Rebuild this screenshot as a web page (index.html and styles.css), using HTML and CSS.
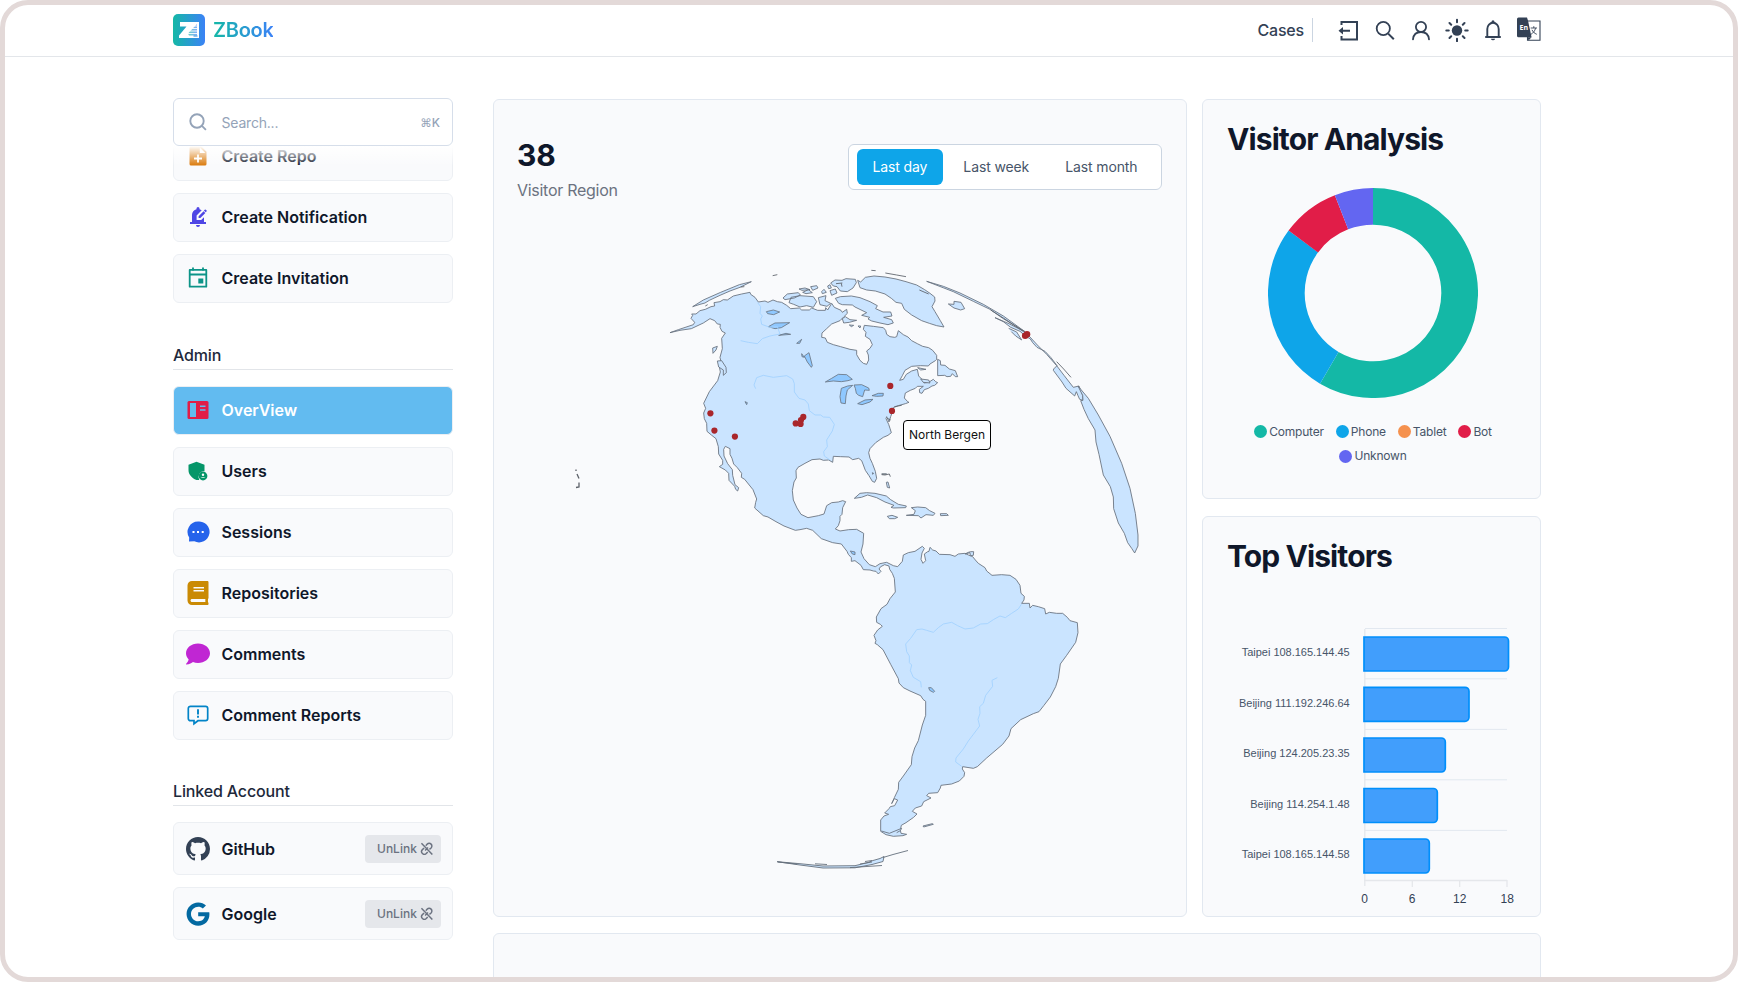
FILE: index.html
```html
<!DOCTYPE html>
<html lang="en">
<head>
<meta charset="utf-8">
<title>ZBook</title>
<link rel="stylesheet" href="styles.css">
</head>
<body>
<div class="frame">
  <header class="topbar">
    <a class="brand">
      <svg class="brand-mark" viewBox="0 0 32 32">
        <defs><linearGradient id="brand" x1="0" x2="1"><stop offset="0" stop-color="#14b8a6"/><stop offset="1" stop-color="#3b82f6"/></linearGradient></defs>
        <rect width="32" height="32" rx="5" fill="url(#brand)"/>
        <path d="M7 8h19v16H6v-2.500L13.500 12.500H7z" fill="#fff"/>
        <path d="M15 19.500 24 10v11.500h-8" fill="url(#brand)" opacity=".65"/>
        <path d="M19 14.500h5M17 17h7M14 19.500h10M20 12h4" stroke="#fff" stroke-width=".9"/>
        <path d="M20.500 22h4" stroke="#2f8fdc" stroke-width="1"/>
      </svg>
      <span class="brand-name">ZBook</span>
    </a>
    <nav class="tools">
      <span class="cases">Cases</span>
      <svg class="tool" viewBox="0 0 24 24"><path d="M4.500 7V4h15.500v17.500H4.500V18" fill="none" stroke="currentColor" stroke-width="2"/><path d="M5.500 12.700H13" stroke="currentColor" stroke-width="2"/><path d="M1.500 12.700 6 9v7.400z" fill="currentColor"/></svg>
      <svg class="tool" viewBox="0 0 24 24" fill="none" stroke="currentColor" stroke-width="1.800"><circle cx="10.300" cy="10.500" r="6.600"/><path d="m15.200 15.600 5.600 5.700" stroke-width="2"/></svg>
      <svg class="tool" viewBox="0 0 24 24" fill="none" stroke="currentColor" stroke-width="1.800" stroke-linecap="round"><circle cx="12" cy="8.900" r="5.100"/><path d="M4 21.300c.5-4.600 3.700-7.300 8-7.300s7.500 2.700 8 7.300"/></svg>
      <svg class="tool" viewBox="0 0 24 24"><circle cx="12" cy="12.500" r="5.200" fill="currentColor"/><path d="M12 1.800v2.500M12 20.700v2.500M1.300 12.500h2.500M20.200 12.500h2.500M4.500 5l1.700 1.700M17.800 18.300l1.700 1.700M4.500 20l1.700-1.700M17.800 6.700 19.500 5" stroke="currentColor" stroke-width="2" stroke-linecap="round"/></svg>
      <svg class="tool" viewBox="0 0 24 24"><path d="M6.300 18.500V11a5.700 6.200 0 0 1 11.400 0v7.500M4.200 19h15.600" fill="none" stroke="currentColor" stroke-width="1.900"/><path d="M10.500 5V3.700a1.500 1.500 0 0 1 3 0V5zM10 20.700h4a2 1.500 0 0 1-4 0z" fill="currentColor"/></svg>
      <svg class="tool lang" viewBox="0 0 24 25"><path d="M10.500 4H23v19.200H10.500z" fill="#fff" stroke="currentColor" stroke-width="1.100"/><path d="M1.500.5H10l.9 2.800 3.700 17H1.500a1.500 1.500 0 0 1-1.500-1.500V2A1.500 1.500 0 0 1 1.500.5z" fill="currentColor"/><path d="m10.500 20.300 4 0-3 3.200z" fill="currentColor"/><path d="M13.700 11h6.300M16.800 9.200V11M18.600 11.200c-.8 2.800-2.400 4.800-4.700 6.200M15 12.800c.9 2 2.400 3.500 4.800 4.500" fill="none" stroke="currentColor" stroke-width=".9"/><text class="lang-text" x="2.600" y="13">En</text></svg>
    </nav>
  </header>

  <main class="page">
    <aside class="sidebar">
      <div class="search">
        <svg class="search-icon" viewBox="0 0 18 18" fill="none" stroke="currentColor" stroke-width="1.900"><circle cx="8" cy="8" r="6.700"/><path d="m12.900 12.900 4 4"/></svg>
        <span class="search-hint">Search...</span>
        <kbd class="search-key"><span class="cmd">⌘</span>K</kbd>
      </div>
      <div class="menu">
        <ul class="list first">
          <li class="item"><svg class="ico" viewBox="0 0 24 24"><path d="M5.500 2H15l5.500 5.800V20a1.600 1.600 0 0 1-1.600 1.600H5.100A1.600 1.600 0 0 1 3.500 20V4a2 2 0 0 1 2-2z" fill="#d97706"/><path d="M13.800 3.500V9h5.500z" fill="#fff"/><path d="M12 10.500v8M8 14.500h8" stroke="#fff" stroke-width="1.800"/></svg><span>Create Repo</span></li>
          <li class="item"><svg class="ico" viewBox="0 0 24 24" fill="#4f46e5"><path d="M17.580 6.250l1.770 1.770L14.370 13H12.600v-1.770l4.980-4.980zm3.270-.44l-1.060-1.060a.75.75 0 0 0-1.060 0l-.85.85 1.770 1.770.85-.85c.29-.2.300-.52.350-.71zM18 12.200V17h2v2H4v-2h2v-7c0-2.790 1.910-5.140 4.500-5.800v-.7a1.500 1.500 0 0 1 3 0v.7c.82.210 1.570.590 2.210 1.090L10.600 10.400V15h4.600l2.800-2.800zM10 20h4a2 2 0 0 1-4 0z"/></svg><span>Create Notification</span></li>
          <li class="item"><svg class="ico" viewBox="0 0 24 24"><path d="M3.700 3.900h16.600v16.800H3.700z" fill="none" stroke="#0d9488" stroke-width="1.800" stroke-linejoin="round"/><path d="M3.500 8.500h17M7 1.500v3M17 1.500v3" stroke="#0d9488" stroke-width="1.800"/><path d="M12.300 12.500h5v5h-5z" fill="#0d9488"/></svg><span>Create Invitation</span></li>
        </ul>
        <h3 class="group">Admin</h3>
        <ul class="list">
          <li class="item active"><svg class="ico" viewBox="0 0 24 24"><rect x="1.500" y="3" width="21" height="18" rx="1.500" fill="#e11d48"/><path d="M4 5h6v14H4z" fill="#62bbf0"/><path d="M14 8.300h5.500M14 12h5.500" stroke="#62bbf0" stroke-width="1.500"/></svg><span>OverView</span></li>
          <li class="item"><svg class="ico" viewBox="0 0 24 24"><path d="M10.500 2.800 18.500 5.700v6.200a6 6 0 0 0-5.200 9l-2.800.2C5.500 18.800 2.500 15.500 2.500 11V5.700z" fill="#059669"/><circle cx="17" cy="17" r="4.400" fill="#059669"/><circle cx="17" cy="15.700" r="1.200" fill="#fff"/><path d="M14.500 18.900a3 1.600 0 0 1 5 0z" fill="#fff"/></svg><span>Users</span></li>
          <li class="item"><svg class="ico" viewBox="0 0 24 24"><path d="M12 1.500A10.500 10.500 0 1 1 8.300 21.300L3 21.600l.2-4A10.500 10.500 0 0 1 12 1.500z" fill="#2563eb"/><path d="M6.500 11h2v2h-2zM11 11h2v2h-2zM15.700 11h2v2h-2z" fill="#fff"/></svg><span>Sessions</span></li>
          <li class="item"><svg class="ico" viewBox="0 0 448 512"><path fill="#ca8a04" d="M448 360V24c0-13.300-10.700-24-24-24H96C43 0 0 43 0 96v320c0 53 43 96 96 96h328c13.300 0 24-10.700 24-24v-16c0-7.500-3.500-14.300-8.900-18.700-4.200-15.400-4.200-59.300 0-74.700 5.400-4.300 8.900-11.100 8.900-18.600zM128 134c0-3.300 2.700-6 6-6h212c3.300 0 6 2.700 6 6v20c0 3.300-2.700 6-6 6H134c-3.300 0-6-2.700-6-6v-20zm0 64c0-3.300 2.700-6 6-6h212c3.300 0 6 2.700 6 6v20c0 3.300-2.700 6-6 6H134c-3.300 0-6-2.700-6-6v-20zm253.400 250H96c-17.700 0-32-14.300-32-32 0-17.600 14.400-32 32-32h285.400c-1.900 17.100-1.900 46.900 0 64z"/></svg><span>Repositories</span></li>
          <li class="item"><svg class="ico" viewBox="0 0 512 512"><path fill="#c026d3" d="M256 32C114.600 32 0 125.100 0 240c0 49.600 21.400 95 57 130.700C44.500 421.100 2.700 466 2.200 466.500c-2.200 2.300-2.800 5.700-1.500 8.700S4.800 480 8 480c66.300 0 116-31.800 140.600-51.400 32.700 12.300 69 19.400 107.400 19.400 141.400 0 256-93.100 256-208S397.400 32 256 32z"/></svg><span>Comments</span></li>
          <li class="item"><svg class="ico" viewBox="0 0 24 24"><path d="M4.500 3.300h15a2.200 2.200 0 0 1 2.200 2.200v10a2.200 2.200 0 0 1-2.200 2.200H12l-4 3v-3H4.500a2.200 2.200 0 0 1-2.200-2.200v-10a2.200 2.200 0 0 1 2.200-2.200z" fill="none" stroke="#0284c7" stroke-width="1.700"/><path d="M12 6.200v5.300M12 12.800v2" stroke="#0284c7" stroke-width="1.900"/></svg><span>Comment Reports</span></li>
        </ul>
        <h3 class="group linked">Linked Account</h3>
        <ul class="list">
          <li class="item tall"><svg class="ico" viewBox="0 0 16 16"><path fill="#334155" d="M8 0C3.580 0 0 3.580 0 8c0 3.540 2.290 6.530 5.470 7.590.4.070.55-.17.55-.38 0-.19-.01-.82-.01-1.490-2.010.37-2.530-.49-2.690-.94-.09-.23-.48-.94-.82-1.130-.28-.15-.68-.52-.01-.53.63-.01 1.080.58 1.230.82.72 1.210 1.870.87 2.330.66.070-.52.280-.87.510-1.070-1.780-.2-3.640-.89-3.640-3.950 0-.87.310-1.590.82-2.150-.08-.2-.36-1.020.080-2.120 0 0 .67-.21 2.200.82.640-.18 1.320-.27 2-.27s1.360.09 2 .27c1.530-1.040 2.200-.82 2.200-.82.440 1.100.16 1.920.08 2.120.51.56.82 1.270.82 2.150 0 3.070-1.870 3.750-3.650 3.950.29.25.54.73.54 1.480 0 1.070-.01 1.930-.01 2.200 0 .21.150.46.550.38A8.010 8.010 0 0 0 16 8c0-4.420-3.580-8-8-8z"/></svg><span>GitHub</span>
            <button class="unlink">UnLink<svg viewBox="0 0 14 14" fill="none" stroke="currentColor" stroke-width="1.500"><path d="M1.500 1.200 12.800 13M6 3.800l1.500-1.600a2.800 2.800 0 0 1 4 4L9.800 7.600M8 10.300l-1.500 1.600a2.800 2.800 0 0 1-4-4L4.300 6.200M5.300 8.700l3-3"/></svg></button></li>
          <li class="item tall"><svg class="ico" viewBox="0 0 488 512"><path fill="#0369a1" d="M488 261.800C488 403.300 391.100 504 248 504 110.800 504 0 393.200 0 256S110.800 8 248 8c66.800 0 123 24.500 166.300 64.900l-67.500 64.900C258.500 52.600 94.300 116.600 94.300 256c0 86.500 69.100 156.600 153.700 156.600 98.200 0 135-70.400 140.800-106.900H248v-85.300h236.100c2.300 12.700 3.900 24.900 3.900 41.400z"/></svg><span>Google</span>
            <button class="unlink">UnLink<svg viewBox="0 0 14 14" fill="none" stroke="currentColor" stroke-width="1.500"><path d="M1.500 1.200 12.800 13M6 3.800l1.500-1.600a2.800 2.800 0 0 1 4 4L9.800 7.600M8 10.300l-1.500 1.600a2.800 2.800 0 0 1-4-4L4.300 6.200M5.300 8.700l3-3"/></svg></button></li>
        </ul>
      </div>
    </aside>

    <section class="dash">
      <article class="card region">
        <div class="region-head">
          <div>
            <div class="count">38</div>
            <div class="caption">Visitor Region</div>
          </div>
          <div class="tabs">
            <button class="tab on">Last day</button><button class="tab">Last week</button><button class="tab">Last month</button>
          </div>
        </div>
        <div class="map-wrap">
        <svg class="map" viewBox="494 210 692 700">
          <g transform="translate(640 250) scale(.33333)">
            <g class="land">
              <path d="M153 205L158 196 155 192 168 192 180 182 196 178 213 170 224 168 222 158 240 155 250 149 262 150 280 138 305 132 330 127 332 133 345 142 355 156 375 153 384 157 399 150 412 155 425 157 440 166 452 176 478 174 485 180 508 180 515 174 533 181 556 181 557 173 563 180 575 160 583 172 603 181 607 187 620 178 622 190 612 200 600 212 575 222 560 236 546 249 545 262 556 264 562 277 580 284 602 290 630 298 650 301 650 314 660 331 670 340 680 343 686 330 685 315 680 303 690 295 697 284 690 268 676 259 678 247 670 238 673 226 700 229 730 233 737 241 740 253 750 260 764 262 770 260 775 242 790 254 804 261 815 272 832 281 848 289 866 293 878 301 890 316 890 328 886 332 870 342 865 348 842 347 815 349 795 361 787 377 779 391 790 388 799 373 815 363 832 358 836 378 846 388 852 399 866 397 880 388 887 395 893 398 884 406 876 408 865 415 853 419 846 430 839 428 838 418 850 409 832 409 826 415 811 421 796 429 793 444 803 455 807 457 796 461 775 467 760 473 762 485 755 492 752 500 747 516 740 500 738 506 746 523 750 535 754 548 744 556 730 562 707 578 690 596 686 608 690 625 697 640 706 664 710 685 704 697 697 694 687 677 676 661 670 645 665 632 656 625 638 629 627 621 602 620 580 619 578 637 566 630 550 631 540 627 516 629 495 640 474 652 468 662 469 684 462 696 457 722 460 750 471 774 483 793 504 803 535 797 552 792 560 767 575 758 595 756 608 752 617 755 608 773 606 793 600 799 600 812 595 827 586 837 600 843 626 839 650 838 671 850 669 882 663 906 672 926 688 944 706 950 720 941 740 937 760 947 773 950 787 934 790 915 805 908 825 904 847 889 853 895 846 909 843 928 849 940 857 932 853 912 863 905 867 904 870 892 878 900 888 903 898 913 930 914 945 919 955 912 975 910 985 915 998 920 1006 930 1015 940 1035 953 1040 963 1056 976 1085 974 1110 976 1128 988 1140 1006 1143 1030 1153 1039 1152 1050 1145 1060 1168 1060 1170 1074 1178 1066 1195 1070 1214 1076 1217 1092 1228 1087 1250 1090 1268 1090 1282 1102 1290 1112 1312 1118 1314 1148 1307 1177 1280 1216 1261 1242 1255 1285 1247 1310 1231 1341 1212 1366 1197 1385 1180 1391 1142 1409 1113 1436 1107 1458 1088 1483 1040 1524 1012 1550 1000 1555 968 1550 967 1557 974 1568 972 1579 958 1593 935 1602 903 1606 901 1614 893 1628 866 1630 860 1637 873 1644 851 1655 845 1668 826 1674 817 1684 831 1692 821 1702 798 1718 784 1726 781 1740 783 1750 800 1753 789 1757 760 1759 738 1754 722 1744 722 1710 732 1698 746 1693 734 1689 747 1676 751 1670 764 1667 773 1650 763 1646 755 1661 763 1643 775 1618 776 1597 790 1578 814 1544 816 1520 824 1494 835 1472 847 1425 857 1396 857 1354 849 1348 842 1337 810 1323 790 1313 777 1299 775 1286 752 1243 729 1199 712 1184 705 1180 708 1172 702 1156 713 1140 727 1129 721 1123 710 1117 709 1101 723 1076 741 1063 750 1046 766 1026 763 985 757 970 749 958 747 948 734 944 722 950 717 957 723 964 715 972 708 964 700 963 690 960 670 959 663 946 645 932 634 934 634 923 625 913 621 904 604 882 578 878 544 866 518 841 500 835 480 839 466 841 432 828 408 815 384 801 370 797 344 774 347 757 350 747 339 719 314 688 304 682 305 670 292 653 281 642 276 625 270 613 270 596 256 589 251 598 252 618 263 641 277 659 278 676 285 704 296 713 293 723 287 718 284 709 267 691 266 670 256 660 238 650 248 643 248 631 236 612 235 590 230 573 228 566 214 555 201 544 200 520 193 506 191 489 197 475 191 460 208 425 233 392 241 366 238 350 244 340 240 322 247 296 245 265 256 249 246 244 240 232 241 223 232 222 224 212 210 206 190 219 154 236 120 241 90 248 115 239 160 224 164 217z"/>
              <path d="M158 170 190 150 242 127 298 104 334 95 300 112 270 123 240 136 208 151 195 159 180 163z"/>
              <path d="M232 333 245 332 258 352 259 368 250 376 250 360 236 351zM218 294 232 289 228 300 219 310zM429 144 442 132 475 128 481 135 463 144 435 149zM447 158 453 142 480 137 520 140 530 155 520 172 500 167 480 171 461 163zM535 143 558 137 555 152 572 160 561 169 540 164zM488 127 505 119 517 128 498 131zM545 125 552 118 559 127 547 131zM570 122 586 117 591 129 575 136zM477 117 495 114 510 119 486 121zM512 110 530 107 534 114 518 121zM563 108 570 104 574 114 566 116zM572 99 585 90 606 91 618 86 646 88 649 98 639 114 622 125 601 123 591 110 580 108zM586 145 601 140 634 138 660 143 690 155 712 167 707 176 729 186 752 186 756 198 731 202 755 209 760 219 744 224 720 219 695 213 684 207 689 202 665 196 680 188 645 171 637 165 607 164 596 160zM607 206 616 200 630 209 650 211 628 217 611 219zM628 225 641 226 634 230zM654 228 662 228 660 234z"/>
              <path d="M653 91 662 96 676 82 702 78 735 81 768 87 798 95 830 105 854 119 870 130 884 141 885 153 876 170 885 185 901 212 912 231 890 227 868 220 845 212 815 195 793 178 785 160 768 157 754 145 735 132 706 123 680 120 660 113z"/>
              <path d="M925 162 942 163 942 154 963 157 974 176 962 180 942 174zM893 328 893 377 914 376 921 380 932 379 937 371 946 380 953 380 946 362 928 357 915 346 902 345 901 332zM833 353 858 358 842 360zM842 387 866 390 870 399 850 397z"/>
              <path d="M643 745 660 730 680 728 705 730 739 738 752 749 775 763 799 768 797 773 760 774 753 772 762 766 735 756 710 743 683 735 664 742zM814 773 833 771 857 773 869 782 885 790 880 796 858 794 843 804 835 797 799 796 822 793 826 782zM742 799 756 796 773 802 764 806 748 806zM901 791 920 791 925 796 902 797zM725 672 740 672zM739 697 744 696 749 714 742 712zM975 912 985 907 992 905 1001 905 1000 916 991 917 990 908z"/>
              <path d="M724 1743 748 1750 785 1735 781 1742 770 1748M849 1728 877 1721 880 1723 851 1731z"/>
              <path d="M1065 203 1090 215 1112 232 1140 244 1155 257 1171 267 1178 278 1191 292 1215 304 1233 323 1251 347 1241 357 1240 361 1266 396 1278 415 1304 438 1309 425 1314 437 1319 448 1329 451 1328 436 1317 408 1300 412 1272 376 1250 347 1220 313 1192 285 1157 247 1107 221z"/>
              <path d="M1314 408 1345 445 1375 495 1410 559 1445 640 1470 715 1486 790 1494 855 1494 888 1484 909 1475 895 1463 878 1453 850 1435 819 1421 776 1420 741 1411 710 1390 675 1377 613 1368 576 1365 540 1345 506 1332 478 1322 452 1329 451 1328 436z"/>
              <path d="M860 94 910 109 960 129 1030 163 1090 198 1155 245 1135 233 1088 205 1050 178 1000 154 940 125zM1106 235 1130 246 1145 270 1127 258 1114 245"/>
            </g>
            <g class="lake">
              <path d="M556 396 575 385 595 373 620 374 637 388 624 392 604 395 580 393zM604 415 623 408 638 406 622 420 618 438 616 461 603 459 600 440zM642 405 665 404 686 414 688 421 674 420 668 440 656 436 649 430 646 415zM653 461 675 450 699 448 690 456 666 464zM696 437 715 430 730 430 729 438 710 439zM493 318 507 308 517 347 514 352 502 336zM485 311 493 322 486 320zM379 185 400 180 419 186 401 194 383 191zM385 230 405 219 449 218 424 233 405 236zM416 256 438 250 452 253zM470 280 485 268 479 280zM315 455 322 458 320 464zM631 903 645 906 645 914 637 912zM866 1313 874 1313 884 1324 880 1327 869 1321zM697 668 701 670 698 673z"/>
            </g>
            <g class="river">
              <path d="M353 158 362 170 360 190 367 198 362 207 365 223 390 232 412 230 420 252 390 258 367 266 352 281 325 277 302 272M347 416 342 405 350 383 370 376 400 382 440 377 458 387 463 401 463 426 477 445 495 450 505 462 508 482 525 495 542 495 550 501 569 502 583 523 577 543 560 570 562 590 551 605 553 618 570 630"/>
              <path d="M1144 1063 1135 1077 1115 1090 1096 1103 1080 1098 1060 1109 1042 1121 1022 1122 1000 1134 975 1137 953 1127 935 1117 910 1122 895 1133 880 1147 860 1141 846 1137 830 1139 812 1165 797 1182 800 1205 808 1218 808 1238 815 1245 811 1262 820 1282 842 1295 844 1312M1072 1283 1056 1291 1058 1309 1037 1336 1030 1360 1019 1370 1020 1390 1014 1408 1019 1428 985 1473 970 1497 948 1524 947 1536 965 1549"/>
            </g>
            <g class="flecks">
              <path d="M398 77 412 74M694 61 707 62M736 69 770 75 798 80M302 111 313 110M196 168 203 164M725 674 735 675 748 672M748 672 751 680M763 470 785 466M742 505 752 510M838 120 866 132M1052 180 1090 204 1150 244M1250 335 1271 357 1293 382M588 101 607 99M604 100 606 110"/>
            </g>
          </g>
          <g class="land thin">
            <path d="M777 861.700 800 863.700 823 866 855 865.700 868 862.500 873 860.500 880 858.500 884 856.500 883 861.500 872 864.500 855 867.800 823 868 800 865z"/>
            <path d="M883 857.500 893 854.500 908 850.500M815 863.800 827 864.500M860 864 872 862M850 867.600 882 865.500M865 861.500 872 860.500M778 862 797 864"/>
          </g>
          <g class="flecks thin"><path d="M576 469.500v1.500M577 474 579 478.500M576 487.500 579 487V482.500"/></g>
          <g class="pins">
            <circle cx="710.400" cy="413.300" r="3.100"/><circle cx="714.400" cy="430.600" r="3.100"/><circle cx="734.900" cy="436.600" r="3.100"/><circle cx="890.300" cy="385.900" r="3.100"/><circle cx="892" cy="410.900" r="3.100"/>
            <circle cx="795.700" cy="423.400" r="3.100"/><circle cx="803.300" cy="416.900" r="3.100"/><circle cx="801" cy="420" r="3.100"/><circle cx="800.600" cy="424" r="3.100"/>
            <circle cx="1025.200" cy="335.800" r="3.300"/><circle cx="1027" cy="334.200" r="3.300"/>
          </g>
        </svg>
        <div class="tip">North Bergen</div>
        </div>
      </article>

      <div class="side">
        <article class="card stat">
          <h2>Visitor Analysis</h2>
          <svg class="donut" viewBox="1268 188 210 210" fill="none" stroke-width="36.700">
            <path stroke="#14b8a6" d="M1373 206.350A86.650 86.650 0 1 1 1329.280 367.810"/>
            <path stroke="#0ea5e9" d="M1329.280 367.810A86.650 86.650 0 0 1 1303.340 241.460"/>
            <path stroke="#e11d48" d="M1303.340 241.460A86.650 86.650 0 0 1 1341.520 212.270"/>
            <path stroke="#6366f1" d="M1341.520 212.270A86.650 86.650 0 0 1 1373 206.350"/>
          </svg>
          <ul class="legend">
            <li><i class="dot teal"></i>Computer</li><li><i class="dot sky"></i>Phone</li><li><i class="dot orange"></i>Tablet</li><li><i class="dot rose"></i>Bot</li><li><i class="dot indigo"></i>Unknown</li>
          </ul>
        </article>
        <article class="card stat">
          <h2>Top Visitors</h2>
          <svg class="bars" viewBox="1203 600 337 316">
            <path class="grid" d="M1365 628.500h142M1365 678.800h142M1365 729.400h142M1365 779.800h142M1365 830.400h142"/>
            <path class="axis" d="M1364.800 629v257M1364 880.500h143M1412.300 880v7M1459.700 880v7M1507 880v7"/>
            <g class="bar">
              <path d="M1364 637h140.500a4 4 0 0 1 4 4v26a4 4 0 0 1-4 4H1364z"/>
              <path d="M1364 687.300h101a4 4 0 0 1 4 4v26a4 4 0 0 1-4 4H1364z"/>
              <path d="M1364 738h77.300a4 4 0 0 1 4 4v26a4 4 0 0 1-4 4H1364z"/>
              <path d="M1364 788.500h69.300a4 4 0 0 1 4 4v26a4 4 0 0 1-4 4H1364z"/>
              <path d="M1364 839h61.300a4 4 0 0 1 4 4v26a4 4 0 0 1-4 4H1364z"/>
            </g>
            <g class="who">
              <text x="1241.700" y="656" textLength="108">Taipei 108.165.144.45</text>
              <text x="1239" y="706.600" textLength="110.700">Beijing 111.192.246.64</text>
              <text x="1243.200" y="757" textLength="106.500">Beijing 124.205.23.35</text>
              <text x="1250.200" y="807.600" textLength="99.500">Beijing 114.254.1.48</text>
              <text x="1241.700" y="858" textLength="108">Taipei 108.165.144.58</text>
            </g>
            <g class="ticks"><text x="1364.500" y="903">0</text><text x="1412" y="903">6</text><text x="1459.700" y="903">12</text><text x="1507.300" y="903">18</text></g>
          </svg>
        </article>
      </div>
      <article class="card next"></article>
    </section>
  </main>
</div>
</body>
</html>
```

FILE: styles.css
```css
* { box-sizing: border-box; }
body {
  margin: 0;
  width: 1738px;
  height: 982px;
  overflow: hidden;
  background: #fff;
  font-family: Inter, "Liberation Sans", sans-serif;
  color: #0f172a;
}
ul { list-style: none; margin: 0; padding: 0; }
h2, h3 { margin: 0; }
button { font-family: inherit; border: 0; padding: 0; margin: 0; }

.frame {
  width: 1738px;
  height: 982px;
  border: 5px solid #e3d9d8;
  border-radius: 28px;
  overflow: hidden;
}

.topbar {
  height: 52px;
  padding: 0 192px 2px 168px;
  display: flex;
  align-items: center;
  justify-content: space-between;
  border-bottom: 1px solid #e3e6ea;
}
.brand { display: flex; align-items: center; gap: 8px; }
.brand-mark { width: 32px; height: 32px; display: block; }
.brand-name {
  font-size: 20px;
  font-weight: 600;
  line-height: 28px;
  letter-spacing: -0.3px;
  background: linear-gradient(90deg, #14b8a6, #3b82f6);
  background-clip: text;
  -webkit-background-clip: text;
  color: transparent;
}
.tools { display: flex; align-items: center; gap: 12px; color: #334155; }
.cases {
  font-size: 16px;
  font-weight: 500;
  line-height: 24px;
  letter-spacing: -0.2px;
  padding-right: 8px;
  border-right: 1px solid #cbd5e1;
  margin-right: 12px;
}
.tool { width: 24px; height: 24px; display: block; }
.tool.lang { height: 25px; }
.lang-text { font: 700 7px "Open Sans", sans-serif; fill: #fff; }

.page { display: flex; gap: 40px; padding: 41px 192px 0 168px; }

.sidebar { width: 280px; flex: none; }
.search {
  height: 48px;
  border: 1px solid #d6deea;
  border-radius: 6px;
  display: flex;
  align-items: center;
  padding: 0 12px 0 15px;
  color: #94a3b8;
  background: #fff;
}
.search-icon { width: 18px; height: 18px; margin-right: 14.500px; }
.search-hint { font-size: 14px; letter-spacing: -0.2px; flex: 1; }
.search-key { font: 500 12px Inter, sans-serif; }
.cmd { font-family: "DejaVu Sans", sans-serif; font-size: 11.500px; }
.menu { position: relative; overflow: hidden; }
.menu::before {
  content: "";
  position: absolute;
  inset: 0 0 auto;
  height: 20px;
  background: linear-gradient(#fff, rgba(255, 255, 255, 0));
}
.list { display: flex; flex-direction: column; gap: 12px; }
.list.first { margin-top: -14px; }
.item {
  height: 49px;
  border: 1px solid #eceff3;
  border-radius: 6px;
  background: #f9fafc;
  display: flex;
  align-items: center;
  padding: 0 11px 1px 11.500px;
  gap: 12px;
  font-size: 16px;
  font-weight: 600;
}
.item.active { background: #62bbf0; color: #fff; }
.item.tall { height: 53px; padding-bottom: 0; }
.ico { width: 24px; height: 24px; flex: none; }
.group {
  font-size: 16px;
  font-weight: 500;
  line-height: 24px;
  color: #1e293b;
  margin: 40px 0 16px;
  padding-bottom: 2px;
  border-bottom: 1px solid #e2e5e9;
  letter-spacing: -0.15px;
}
.group.linked { margin-top: 39px; }
.unlink {
  margin-left: auto;
  width: 76px;
  height: 28px;
  padding: 0 8px 0 12px;
  border-radius: 4px;
  background: #e5e7eb;
  color: #6b7280;
  font-size: 12px;
  font-weight: 500;
  display: flex;
  align-items: center;
  justify-content: space-between;
}
.unlink svg { width: 13.500px; height: 13.500px; }

.dash {
  display: grid;
  grid-template-columns: 694px 339px;
  grid-template-rows: 818px 60px;
  gap: 16px 15px;
  padding-top: 1px;
}
.card { background: #f9fafc; border: 1px solid #e2e8f0; border-radius: 6px; }
.next { grid-column: 1 / 3; }

.region { display: flex; flex-direction: column; }
.region-head {
  height: 110px;
  padding: 35px 24px 0 23px;
  display: flex;
  justify-content: space-between;
}
.count { font-size: 30px; font-weight: 700; line-height: 40px; margin-bottom: 3px; }
.caption { font-size: 16px; line-height: 24px; color: #6b7280; letter-spacing: -0.28px; }
.tabs {
  height: 46px;
  width: 314px;
  margin-top: 8.500px;
  padding: 4px 7.500px;
  border: 1px solid #cbd5e1;
  border-radius: 6px;
  background: #fff;
  display: flex;
  justify-content: space-between;
}
.tab {
  padding: 0 16px;
  border-radius: 6px;
  background: none;
  font-size: 14px;
  letter-spacing: -0.12px;
  color: #475569;
}
.tab.on { background: #0ea5e9; color: #fff; }
.map-wrap { position: relative; width: 692px; height: 700px; }
.map { width: 692px; height: 700px; display: block; }
.land path { fill: #cae4ff; stroke: #67717d; stroke-width: 2.600; stroke-linejoin: round; }
.land.thin path { stroke-width: .9; }
.lake path { fill: #8fc8ff; stroke: #67717d; stroke-width: 2.400; }
.river path { fill: none; stroke: #a5d3ff; stroke-width: 2.800; }
.flecks path { fill: none; stroke: #5c6169; stroke-width: 2.600; }
.flecks.thin path { stroke-width: 1.300; }
.pins { fill: #a9262b; }
.tip {
  position: absolute;
  left: 409px;
  top: 210px;
  width: 88px;
  height: 30px;
  border: 1px solid #000;
  border-radius: 4px;
  background: #fff;
  color: #111;
  font-size: 12px;
  line-height: 28px;
  text-align: center;
}

.side { display: flex; flex-direction: column; gap: 17px; }
.stat { height: 400px; flex: none; }
.stat:last-child { height: 401px; }
.stat h2 { font-size: 30px; font-weight: 700; line-height: 40px; padding: 19px 24px 0; letter-spacing: -0.9px; }
.donut { display: block; width: 210px; height: 210px; margin: 29px auto 0 65px; }
.legend {
  display: flex;
  flex-wrap: wrap;
  justify-content: center;
  gap: 0 12px;
  width: 260px;
  margin: 21.500px auto 0 40px;
  font-size: 12px;
  letter-spacing: -0.2px;
  line-height: 24.500px;
  color: #475569;
}
.legend li { display: flex; align-items: center; gap: 2px; }
.dot { width: 13px; height: 13px; border-radius: 50%; }
.teal { background: #14b8a6; }
.sky { background: #0ea5e9; }
.orange { background: #f5914e; }
.rose { background: #e11d48; }
.indigo { background: #6366f1; }
.bars { display: block; width: 337px; height: 316px; margin-top: 24px; }
.grid { stroke: #e2e8f0; fill: none; }
.axis { stroke: #e5e7eb; fill: none; stroke-width: 1.300; }
.bar path { fill: #419efc; stroke: #008ffb; stroke-width: 1.700; }
.who { font: 11px "Liberation Sans", sans-serif; fill: #475569; }
.ticks { font: 12px "Liberation Sans", sans-serif; fill: #334155; text-anchor: middle; }
```
